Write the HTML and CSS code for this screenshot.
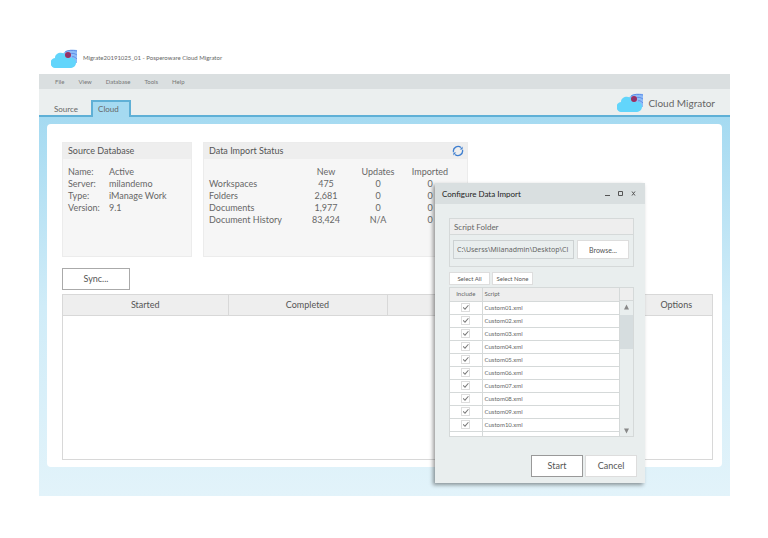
FILE: index.html
```html
<!DOCTYPE html>
<html lang="en">
<head>
    <meta charset="UTF-8">
    <meta name="viewport" content="width=device-width, initial-scale=1.0">
    <title>Cloud Migrator</title>
    <link rel="stylesheet" href="styles.css">
</head>
<body>
    <!-- shared logo -->
    <svg class="defs" aria-hidden="true">
        <symbol id="logo" viewBox="0 0 26 19">
            <path d="M12 5C14 1 18 0 26 1V14C23 14 20 14 18 12Z" fill="#8fbcf7"/>
            <path d="M14 3C17 1 21 1 26 2M19 5C21 4 23 4 26 6M21 8C22 7 24 8 26 10" fill="none" stroke="#5f8fe8" stroke-width="1"/>
            <path d="M5 19A5 5 0 0 1 4 9C4 4 11 2 15 6C17 7 18 8 18 9C22 8 25 10 25 14C25 17 22 19 19 19Z" fill="#62d5fb"/>
            <circle cx="17" cy="6" r="3" fill="#a32b5b"/>
            <path d="M15 6H19M17 4V8" stroke="#7c3a7c" stroke-width="1"/>
        </symbol>
    </svg>

    <div class="app">
        <header class="titlebar">
            <svg class="logo"><use href="#logo"/></svg>
            <span>Migrate20191025_01 - Posperoware Cloud Migrator</span>
        </header>

        <nav class="menu">
            <a href="#">File</a>
            <a href="#">View</a>
            <a href="#">Database</a>
            <a href="#">Tools</a>
            <a href="#">Help</a>
        </nav>

        <div class="tabs">
            <a href="#" class="tab">Source</a>
            <a href="#" class="tab active">Cloud</a>
            <h1 class="brand">
                <svg class="logo"><use href="#logo"/></svg>
                Cloud Migrator
            </h1>
        </div>

        <main class="workspace">
            <div class="panel">
                <div class="cards">
                    <section class="card source">
                        <h2>Source Database</h2>
                        <dl>
                            <dt>Name:</dt><dd>Active</dd>
                            <dt>Server:</dt><dd>milandemo</dd>
                            <dt>Type:</dt><dd>iManage Work</dd>
                            <dt>Version:</dt><dd>9.1</dd>
                        </dl>
                    </section>

                    <section class="card status">
                        <h2>
                            Data Import Status
                            <button type="button" class="refresh" aria-label="Refresh">
                                <svg viewBox="0 0 12 12">
                                    <path d="M1.5 7A4.6 4.6 0 0 1 9 2.6M10.5 5A4.6 4.6 0 0 1 3 9.4" fill="none" stroke="#3f7fd0" stroke-width="1.3"/>
                                    <path d="M10.6 1.4V4.4H7.8ZM1.4 10.6V7.6H4.2Z" fill="#3f7fd0"/>
                                </svg>
                            </button>
                        </h2>
                        <table class="counts">
                            <thead>
                                <tr><td></td><th>New</th><th>Updates</th><th>Imported</th></tr>
                            </thead>
                            <tbody>
                                <tr><th>Workspaces</th><td>475</td><td>0</td><td>0</td></tr>
                                <tr><th>Folders</th><td>2,681</td><td>0</td><td>0</td></tr>
                                <tr><th>Documents</th><td>1,977</td><td>0</td><td>0</td></tr>
                                <tr><th>Document History</th><td>83,424</td><td>N/A</td><td>0</td></tr>
                            </tbody>
                        </table>
                    </section>
                </div>

                <button type="button" class="btn sync">Sync...</button>

                <div class="history">
                    <table>
                        <thead>
                            <tr>
                                <th class="started">Started</th>
                                <th class="completed">Completed</th>
                                <th></th>
                                <th class="options">Options</th>
                            </tr>
                        </thead>
                    </table>
                </div>
            </div>
        </main>

        <div class="dialog" role="dialog" aria-labelledby="dialog-title">
            <div class="dialog-bar">
                <h2 id="dialog-title">Configure Data Import</h2>
                <button type="button" aria-label="Minimize"><svg viewBox="0 0 5 5"><path d="M0 4.5H5"/></svg></button>
                <button type="button" aria-label="Maximize"><svg viewBox="0 0 5 5"><path d="M.5 .5H4.5V4.5H.5Z"/></svg></button>
                <button type="button" aria-label="Close"><svg viewBox="0 0 5 5"><path d="M1 .5L4 4.5M4 .5L1 4.5"/></svg></button>
            </div>

            <div class="dialog-body">
                <div class="folder">
                    <label for="folder">Script Folder</label>
                    <div class="folder-row">
                        <input type="text" id="folder" value="C:\Userss\Milanadmin\Desktop\Cl">
                        <button type="button" class="btn browse">Browse...</button>
                    </div>
                </div>

                <div class="select-row">
                    <button type="button" class="btn small">Select All</button>
                    <button type="button" class="btn small">Select None</button>
                </div>

                <div class="scripts">
                    <table>
                        <thead>
                            <tr><th class="include">Include</th><th>Script</th></tr>
                        </thead>
                        <tbody>
                            <tr><td><input type="checkbox" id="s1" checked></td><td><label for="s1">Custom01.xml</label></td></tr>
                            <tr><td><input type="checkbox" id="s2" checked></td><td><label for="s2">Custom02.xml</label></td></tr>
                            <tr><td><input type="checkbox" id="s3" checked></td><td><label for="s3">Custom03.xml</label></td></tr>
                            <tr><td><input type="checkbox" id="s4" checked></td><td><label for="s4">Custom04.xml</label></td></tr>
                            <tr><td><input type="checkbox" id="s5" checked></td><td><label for="s5">Custom05.xml</label></td></tr>
                            <tr><td><input type="checkbox" id="s6" checked></td><td><label for="s6">Custom06.xml</label></td></tr>
                            <tr><td><input type="checkbox" id="s7" checked></td><td><label for="s7">Custom07.xml</label></td></tr>
                            <tr><td><input type="checkbox" id="s8" checked></td><td><label for="s8">Custom08.xml</label></td></tr>
                            <tr><td><input type="checkbox" id="s9" checked></td><td><label for="s9">Custom09.xml</label></td></tr>
                            <tr><td><input type="checkbox" id="s10" checked></td><td><label for="s10">Custom10.xml</label></td></tr>
                            <tr class="rest"><td></td><td></td></tr>
                        </tbody>
                    </table>
                    <div class="scrollbar">
                        <div class="corner"></div>
                        <button type="button" aria-label="Scroll up"><svg viewBox="0 0 6 6"><path d="M3 0L6 6H0Z"/></svg></button>
                        <div class="thumb"></div>
                        <button type="button" aria-label="Scroll down"><svg viewBox="0 0 6 6"><path d="M0 0H6L3 6Z"/></svg></button>
                    </div>
                </div>
            </div>

            <div class="dialog-actions">
                <button type="button" class="btn start">Start</button>
                <button type="button" class="btn">Cancel</button>
            </div>
        </div>
    </div>
</body>
</html>
```

FILE: styles.css
```css
* {
    box-sizing: border-box;
}
body {
    font-family: Lato, 'Noto Sans', sans-serif;
    font-size: 9px;
    line-height: 12px;
    color: #666;
    margin: 42px 38px 42px 39px;
    background-color: #fff;
}
h1, h2, dl, dd {
    margin: 0;
    font-size: 9px;
    font-weight: normal;
}
a {
    color: inherit;
    text-decoration: none;
}
button, input {
    font: inherit;
    color: inherit;
    margin: 0;
    padding: 0;
}
button {
    border: none;
    background: none;
}
table {
    border-collapse: collapse;
}
th, td {
    font-weight: normal;
    padding: 0;
}
.defs {
    display: none;
}
.app {
    position: relative;
    box-shadow: 0 0 1px #ddd;
}

/* title, menu and tabs */
.titlebar {
    display: flex;
    align-items: center;
    gap: 6px;
    height: 32px;
    padding-left: 12px;
    font-size: 6px;
}
.logo {
    width: 26px;
    height: 19px;
}
.menu {
    display: flex;
    align-items: center;
    gap: 14px;
    height: 15px;
    padding: 0 16px;
    font-size: 6px;
    color: #777;
    background-color: #dadfe0;
}
.tabs {
    display: flex;
    align-items: flex-end;
    height: 28px;
    padding: 0 15px;
    background-color: #ebefef;
    border-bottom: 2px solid #5fb0d6;
    font-size: 8px;
}
.tab {
    margin-right: 13px;
}
.tab.active {
    padding: 1px 10px 2px 5px;
    margin-bottom: -2px;
    border: 2px solid #5fb0d6;
    border-bottom: none;
    background-color: #a5daf1;
}
.brand {
    display: flex;
    align-items: center;
    gap: 5px;
    margin-left: auto;
    padding-bottom: 3px;
    font-size: 10px;
}
.workspace {
    padding: 7px 8px 29px;
    background: linear-gradient(#a5daf1, #d0ecf8 50%, #e2f3fa);
}
.panel {
    padding: 18px 9px 7px 15px;
    border-radius: 4px;
    background-color: #fff;
}

/* summary cards */
.cards {
    display: flex;
    gap: 11px;
}
.card {
    height: 115px;
    border: 1px solid #ececec;
    background-color: #f6f6f6;
}
.card h2 {
    display: flex;
    align-items: center;
    justify-content: space-between;
    height: 16px;
    padding: 0 3px 0 5px;
    background-color: #eee;
    color: #555;
}
.source {
    width: 130px;
}
.status {
    width: 265px;
}
.source dl {
    display: grid;
    grid-template-columns: 41px 1fr;
    padding: 7px 5px;
}
.refresh {
    width: 12px;
    height: 12px;
}
.refresh svg, .dialog-bar svg, .scrollbar svg {
    display: block;
}
.counts {
    margin: 7px 5px;
    text-align: center;
    table-layout: fixed;
    width: 247px;
}
.counts td:first-child, .counts th:first-child {
    width: 91px;
    text-align: left;
    white-space: nowrap;
}

/* buttons */
.btn {
    height: 22px;
    min-width: 52px;
    border: 1px solid #ddd;
    background-color: #fff;
    color: #555;
}
.sync {
    display: block;
    width: 68px;
    margin: 11px 0 4px;
    border-color: #aaa;
}

/* migration history */
.history {
    height: 166px;
    border: 1px solid #d8d8d8;
}
.history table {
    width: 100%;
    table-layout: fixed;
}
.history th {
    height: 20px;
    background-color: #eee;
    border-bottom: 1px solid #d8d8d8;
    border-right: 1px solid #d8d8d8;
    color: #555;
}
.history th:last-child {
    border-right: none;
}
.started {
    width: 165px;
}
.completed {
    width: 159px;
}
.options {
    width: 72px;
}

/* import dialog */
.dialog {
    position: absolute;
    top: 141px;
    right: 85px;
    width: 210px;
    background-color: #e9eeee;
    box-shadow: -2px 2px 4px rgba(0,0,0,0.4);
}
.dialog-bar {
    display: flex;
    align-items: center;
    gap: 8px;
    height: 21px;
    padding: 0 9px 0 7px;
    background-color: #d9dfe0;
}
.dialog-bar h2 {
    flex: 1;
    font-size: 8px;
    color: #222;
}
.dialog-bar svg {
    width: 5px;
    height: 5px;
    fill: none;
    stroke: #555;
}
.dialog-body {
    padding: 14px 11px 0 14px;
}
.folder {
    border: 1px solid #d5d9d9;
    font-size: 8px;
}
.folder label {
    display: block;
    height: 16px;
    padding: 2px 4px;
    background-color: #eee;
    border-bottom: 1px solid #d5d9d9;
}
.folder-row {
    display: flex;
    gap: 3px;
    padding: 5px 4px 7px 3px;
}
.folder-row input {
    flex: 1;
    min-width: 0;
    height: 19px;
    padding-left: 3px;
    border: 1px solid #ccd1d2;
    background-color: #e9eeee;
    font-family: 'Noto Sans', sans-serif;
    font-size: 7px;
}
.browse {
    height: 19px;
    font-size: 7px;
}
.select-row {
    display: flex;
    gap: 2px;
    margin: 5px 0 2px;
}
.small {
    height: 13px;
    min-width: 41px;
    font-size: 6px;
    line-height: 8px;
}
.scripts {
    display: flex;
    border: 1px solid #d5d9d9;
    font-size: 6px;
}
.scripts table {
    flex: 1;
    background-color: #fff;
    table-layout: fixed;
}
.scripts th, .scripts td {
    height: 13px;
    padding: 0 2px;
    line-height: 8px;
    text-align: left;
    border-bottom: 1px solid #d5d9d9;
    border-right: 1px solid #d5d9d9;
}
.scripts th {
    background-color: #eee;
}
.scripts .include {
    width: 32px;
}
.scripts td:first-child, .scripts .include {
    text-align: center;
}
.scripts .rest td {
    height: 5px;
    border-bottom: none;
}
.scripts input {
    appearance: none;
    display: grid;
    place-items: center;
    width: 9px;
    height: 9px;
    margin: 0 auto;
    border: 1px solid #ddd;
    background-color: #fff;
}
.scripts input:checked::before {
    content: "";
    width: 6px;
    height: 5px;
    background-color: #777;
    clip-path: polygon(0 55%, 15% 40%, 35% 70%, 88% 0, 100% 12%, 38% 100%);
}
.scrollbar {
    display: flex;
    flex-direction: column;
    width: 13px;
}
.corner {
    height: 13px;
    background-color: #eee;
    border-bottom: 1px solid #d5d9d9;
}
.scrollbar button {
    padding: 3px 4px 5px;
}
.scrollbar button:last-child {
    padding: 4px 4px 2px;
}
.scrollbar svg {
    width: 5px;
    height: 6px;
    fill: #888;
}
.thumb {
    height: 34px;
    margin-bottom: auto;
    background-color: #d6dddf;
}
.dialog-actions {
    display: flex;
    justify-content: flex-end;
    gap: 2px;
    padding: 18px 8px 6px;
}
.start {
    border-color: #999;
}
```
